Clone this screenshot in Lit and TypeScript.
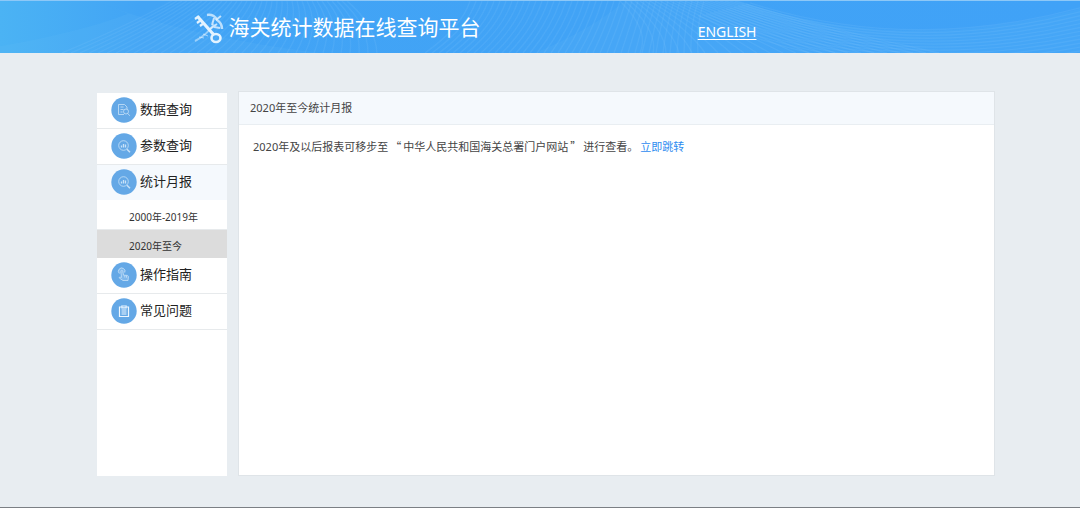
import { LitElement, html, css, svg } from "lit";
import { customElement, property, state } from "lit/decorators.js";

type IconName = "doc" | "chart" | "hand" | "clip";

const glyphs = {
  doc: svg`<path d="M13 17.500H7.500v-10h6l2.500 2.500v2M9.500 10h3M9.500 12.500h3M9.500 15h2"/><circle cx="15" cy="14.500" r="2.500"/><path d="M16.800 16.500l2 2.300"/>`,
  chart: svg`<circle cx="12.500" cy="12.500" r="4.800"/><path d="M16 16.200l3 3" stroke-width="1.500"/><path d="M10.500 14.500v-2M12.500 14.500v-3.500M14.500 14.500v-3" stroke-width="1.300"/>`,
  hand: svg`<path d="M10.500 15.500L9.800 9.500a1 1 0 0 1 2-.3l.7 4 3.700.2c.9.200 1.300.800 1.200 1.500l-.4 3.600h-5L8.500 16.200c-.6-1 .5-1.700 1.200-1l1 1M13.800 13.500v2M15.500 13.700v2"/><path d="M8.300 11.500a3.300 3.300 0 1 1 5.500-1"/>`,
  clip: svg`<path d="M10 9H8.500v9.500h9V9H16M10.800 8h4.400v1.800h-4.400z"/><path d="M10.500 12h5M10.500 14h5M10.500 16h5"/>`,
};

@customElement("menu-icon")
class MenuIcon extends LitElement {
  @property() name: IconName = "doc";

  static styles = css`
    :host { display: block; width: 26px; height: 26px; margin-bottom: 1px; }
    svg { display: block; width: 100%; height: 100%; }
    .disc { fill: #64a8e6; }
    .glyph { fill: none; stroke: #c9e2f8; stroke-width: 0.8; }
    .hand { fill: #a5cef2; fill-opacity: 0.4; }
    .clip { stroke: #eef7ff; stroke-width: 1.2; }
  `;

  render() {
    return html`<svg viewBox="0 0 26 26" aria-hidden="true">
      <circle class="disc" cx="13" cy="13" r="12.7" />
      <g class="glyph ${this.name}">${glyphs[this.name]}</g>
    </svg>`;
  }
}

@customElement("banner-art")
class BannerArt extends LitElement {
  static styles = css`
    :host { display: block; }
    svg { display: block; width: 100%; height: 100%; }
    .line { fill: none; stroke: #8fd0ff; stroke-opacity: 0.13; stroke-width: 1.4; }
    .veil { fill: #6fc0f8; fill-opacity: 0.13; }
  `;

  render() {
    const fanLeft = Array.from({ length: 36 }, (_, i) =>
      svg`<path class="line" d="M${172 + i * 5} 0Q${130 + i * 7} 24 ${62 + i * 9} 53"/>`);
    const fanMid = Array.from({ length: 40 }, (_, i) =>
      svg`<path class="line" d="M${470 + i * 6} 0Q${462 + i * 6} 26 ${425 + i * 7} 53"/>`);
    const fanCross = Array.from({ length: 24 }, (_, i) =>
      svg`<path class="line" d="M${620 + i * 5} 0Q${650 + i * 8} 30 ${640 + i * 13} 53"/>`);
    const fanRight = Array.from({ length: 14 }, (_, i) =>
      svg`<path class="line" d="M${750 - i * 4} ${2 + i}Q${910 - i * 3} ${54 + i * 3} 1080 ${7 + i * 4}"/>`);
    return html`<svg viewBox="0 0 1080 53" preserveAspectRatio="none" aria-hidden="true">
      <defs>
        <linearGradient id="base">
          <stop offset="0" stop-color="#4bb3f4" />
          <stop offset="0.13" stop-color="#42a4f5" />
          <stop offset="1" stop-color="#40a2f7" />
        </linearGradient>
      </defs>
      <rect width="1080" height="53" fill="url(#base)" />
      <path class="veil" d="M0 46Q80 32 128 13L95 0Q180 35 320 53H0z" />
      <path class="veil" d="M535 53Q590 30 625 0H740Q900 56 1080 8V53z" />
      ${fanLeft}${fanMid}${fanCross}${fanRight}
    </svg>`;
  }
}

@customElement("app-root")
class AppRoot extends LitElement {
  @state() private period = "2020年至今";

  static styles = css`
    :host {
      display: flex;
      flex-direction: column;
      box-sizing: border-box;
      min-height: 100vh;
      background: #e8edf1;
      border-bottom: 1px solid #7b7f84;
      color: #444;
      font-family: "Noto Sans", "Noto Sans CJK SC", sans-serif;
      font-size: 11px;
    }
    .banner { display: grid; height: 53px; box-sizing: border-box; border-top: 1px solid #8dc8f7; overflow: hidden; }
    .banner > * { grid-area: 1 / 1; min-height: 0; }
    .bar { z-index: 1; display: grid; grid-template-columns: 18% 1fr 35.4%; align-items: center; color: #fff; }
    .brand { grid-column: 2; display: flex; align-items: center; gap: 4px; }
    .emblem { width: 30px; height: 32px; margin-top: 4px; }
    h1 { margin: 0; padding-bottom: 2px; font-family: "Noto Sans CJK SC", sans-serif; font-size: 21px; line-height: 30px; font-weight: 400; white-space: nowrap; }
    .lang { justify-self: start; padding-top: 10px; color: #fff; font-size: 14px; line-height: 20px; text-underline-offset: 2px; }
    main { flex: 1; display: flex; gap: 11px; padding: 38px 85px 31px 97px; }
    nav { width: 130px; margin-top: 2px; background: #fff; }
    ul { margin: 0; padding: 0; list-style: none; }
    .item {
      display: flex; align-items: center; gap: 3px; box-sizing: border-box; width: 100%; height: 36px;
      padding: 0 14px; border: 0; border-bottom: 1px solid #e7eaec; background: #fff;
      color: #222; font: 13px/18px "Noto Sans CJK SC", sans-serif; cursor: pointer;
    }
    .label { padding-bottom: 4px; }
    .open { background: #f5f9fd; border-bottom-color: #fff; }
    .sub { display: grid; gap: 1px; background: #e7eaec; }
    .period {
      display: block; box-sizing: border-box; width: 100%; height: 28px; padding: 4px 0 0 32px; border: 0;
      background: #fff; color: #333; font: 10px/14px "Noto Sans", "Noto Sans CJK SC", sans-serif; text-align: left; cursor: pointer;
    }
    .current { background: #dcdcdc; }
    .panel { flex: 1; min-width: 0; border: 1px solid #dfe4e8; background: #fff; }
    h2 { margin: 0; padding: 8px 11px; border-bottom: 1px solid #e9eef2; background: #f5f9fd; font-size: 11px; line-height: 16px; font-weight: 400; }
    p { margin: 0; padding: 13px 14px; line-height: 16px; }
    .jump { margin-left: 2px; color: #2d8cf0; text-decoration: none; }
    .quote { margin: 0 2px; font-family: "Noto Sans CJK SC", sans-serif; }
  `;

  private item(icon: IconName, label: string, open = false) {
    return html`<button class="item ${open ? "open" : ""}" type="button">
      <menu-icon name=${icon}></menu-icon><span class="label">${label}</span>
    </button>`;
  }

  render() {
    const periods = ["2000年-2019年", "2020年至今"];
    return html`
      <header class="banner">
        <banner-art></banner-art>
        <div class="bar">
          <div class="brand">
            <svg class="emblem" viewBox="0 0 30 32" fill="none" stroke="#e3f3ff" aria-hidden="true">
              <path d="M1 28Q13 22 20 11" stroke-width="2" stroke-opacity=".5" />
              <path d="M5 24l5 1M9 21l5 2" stroke-opacity=".6" />
              <path d="M13 2q7-1 10 5q5 3 5 9" stroke-width="2.500" stroke-opacity=".75" />
              <path d="M22 7l5-4M20 5l-2 7M23 11l-7 5M20 14l6 1" stroke-width="2" stroke-opacity=".8" />
              <path d="M4 4l16 18" stroke-width="3.200" />
              <path d="M1 6l4-3M3 10l4-3M6 13l4-3" stroke-width="2.200" />
              <ellipse cx="22" cy="25" rx="4.500" ry="4" stroke-width="2.600" />
            </svg>
            <h1>海关统计数据在线查询平台</h1>
          </div>
          <a class="lang" href="#english">ENGLISH</a>
        </div>
      </header>
      <main>
        <nav aria-label="主菜单">
          <ul>
            <li>${this.item("doc", "数据查询")}</li>
            <li>${this.item("chart", "参数查询")}</li>
            <li>
              ${this.item("chart", "统计月报", true)}
              <ul class="sub">
                ${periods.map((p) => html`<li><button
                  class="period ${p === this.period ? "current" : ""}"
                  type="button"
                  @click=${() => (this.period = p)}>${p}</button></li>`)}
              </ul>
            </li>
            <li>${this.item("hand", "操作指南")}</li>
            <li>${this.item("clip", "常见问题")}</li>
          </ul>
        </nav>
        <section class="panel">
          <h2>2020年至今统计月报</h2>
          <p>2020年及以后报表可移步至<span class="quote">“</span>中华人民共和国海关总署门户网站<span class="quote">”</span>进行查看。<a class="jump" href="#monthly">立即跳转</a></p>
        </section>
      </main>
    `;
  }
}
